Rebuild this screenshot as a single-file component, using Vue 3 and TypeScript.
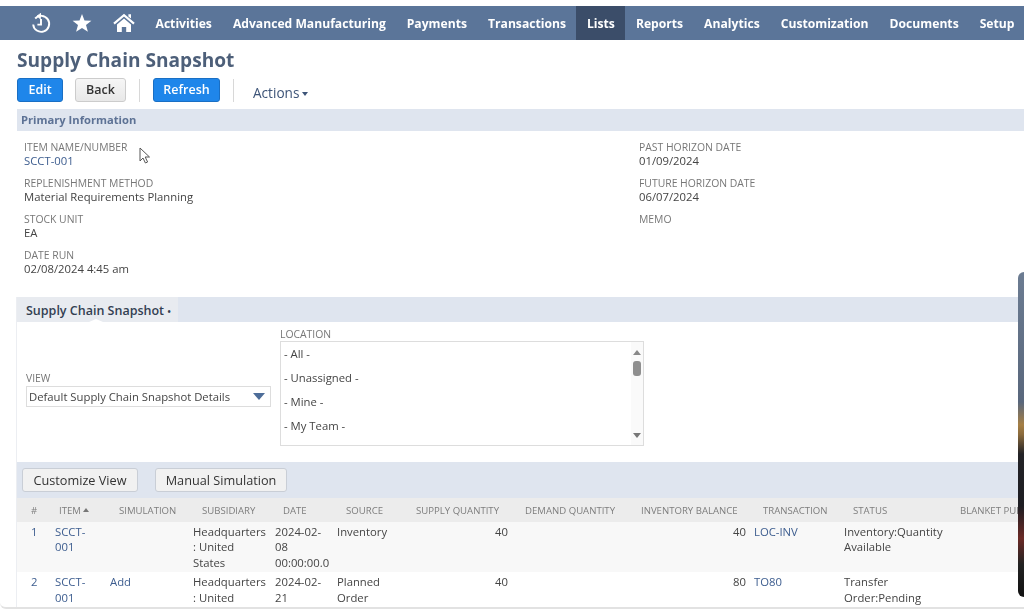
<script setup lang="ts">
const navItems = ['Activities', 'Advanced Manufacturing', 'Payments', 'Transactions', 'Lists', 'Reports', 'Analytics', 'Customization', 'Documents', 'Setup']

const leftFields = [
  { label: 'Item Name/Number', value: 'SCCT-001', link: true },
  { label: 'Replenishment Method', value: 'Material Requirements Planning' },
  { label: 'Stock Unit', value: 'EA' },
  { label: 'Date Run', value: '02/08/2024 4:45 am' },
]
const rightFields = [
  { label: 'Past Horizon Date', value: '01/09/2024' },
  { label: 'Future Horizon Date', value: '06/07/2024' },
  { label: 'Memo', value: '' },
]

const locations = ['- All -', '- Unassigned -', '- Mine -', '- My Team -']

const columns = [
  { key: 'num', label: '#', width: 34, pad: 14 },
  { key: 'item', label: 'Item', width: 55, pad: 8 },
  { key: 'sim', label: 'Simulation', width: 83, pad: 13 },
  { key: 'sub', label: 'Subsidiary', width: 82, pad: 13 },
  { key: 'date', label: 'Date', width: 62, pad: 12 },
  { key: 'source', label: 'Source', width: 79, pad: 13 },
  { key: 'supply', label: 'Supply Quantity', width: 100, pad: 4 },
  { key: 'demand', label: 'Demand Quantity', width: 121, pad: 13 },
  { key: 'balance', label: 'Inventory Balance', width: 117, pad: 8 },
  { key: 'trans', label: 'Transaction', width: 90, pad: 13 },
  { key: 'status', label: 'Status', width: 115, pad: 13 },
  { key: 'blanket', label: 'Blanket Purchase Order', width: 150, pad: 5 },
]

const rows = [
  { num: 1, item: 'SCCT-001', sim: '', sub: 'Headquarters : United States', date: '2024-02-08 00:00:00.0', source: 'Inventory', supply: 40, balance: 40, trans: 'LOC-INV', status: 'Inventory:Quantity Available' },
  { num: 2, item: 'SCCT-001', sim: 'Add', sub: 'Headquarters : United States', date: '2024-02-21 00:00:00.0', source: 'Planned Order', supply: 40, balance: 80, trans: 'TO80', status: 'Transfer Order:Pending Fulfillment' },
]
</script>

<template>
  <div class="page">
    <nav class="nav">
      <div class="nav-icons">
        <svg class="ic-history" width="22" height="22" viewBox="0 0 22 22" fill="none" stroke="#fff" stroke-width="1.9">
          <path d="M5.2 6.5A8 8 0 1 1 3.2 12.5" />
          <path d="M11 1.2 L7 4 L10.8 7.2" fill="#fff" stroke-width="0.8" />
          <path d="M11 7v5.6H7.4" />
        </svg>
        <svg class="ic-star" width="20" height="20" viewBox="0 0 20 20">
          <polygon fill="#fff" points="10,1 12.5,7.4 19.4,7.7 14,12 15.9,18.7 10,15 4.1,18.7 6,12 .6,7.7 7.5,7.4" />
        </svg>
        <svg class="ic-home" width="22" height="20" viewBox="0 0 22 20">
          <path fill="none" stroke="#fff" stroke-width="2.2" d="M1 10.6 11 2.2l10 8.4" />
          <path fill="#fff" d="M15.4 1.2h2.6v4.4l-2.6-2zM4 11.5 11 5.6l7 5.9V19H13.2v-5H8.8v5H4z" />
        </svg>
      </div>
      <a v-for="item in navItems" :key="item" class="nav-item" :class="{ active: item === 'Lists' }">{{ item }}</a>
    </nav>

    <main class="content">
      <h1 class="title">Supply Chain Snapshot</h1>

      <div class="actions">
        <button class="btn primary btn-edit">Edit</button>
        <button class="btn btn-back">Back</button>
        <span class="sep"></span>
        <button class="btn primary btn-refresh">Refresh</button>
        <span class="sep"></span>
        <span class="actions-menu">Actions<i class="caret"></i></span>
      </div>

      <div class="bar">Primary Information</div>

      <section class="fields">
        <div class="col">
          <div v-for="f in leftFields" :key="f.label" class="field">
            <div class="label">{{ f.label }}</div>
            <div class="value" :class="{ link: f.link }">{{ f.value }}</div>
          </div>
        </div>
        <div class="col col-right">
          <div v-for="f in rightFields" :key="f.label" class="field">
            <div class="label">{{ f.label }}</div>
            <div class="value">{{ f.value }}</div>
          </div>
        </div>
      </section>

      <section class="panel">
        <div class="tabs">
          <div class="tab">Supply Chain Snapshot <span class="dot">•</span></div>
        </div>

        <div class="filters">
          <div class="view-filter">
            <div class="label">View</div>
            <div class="select">
              <span>Default Supply Chain Snapshot Details</span>
              <i class="select-arrow"></i>
            </div>
          </div>
          <div class="location-filter">
            <div class="label">Location</div>
            <div class="listbox">
              <div class="options">
                <div v-for="l in locations" :key="l" class="option">{{ l }}</div>
              </div>
              <div class="scroll">
                <i class="up"></i>
                <i class="thumb"></i>
                <i class="down"></i>
              </div>
            </div>
          </div>
        </div>

        <div class="toolbar">
          <button class="btn plain">Customize View</button>
          <button class="btn plain">Manual Simulation</button>
        </div>

        <table class="grid">
          <colgroup>
            <col v-for="c in columns" :key="c.key" :style="{ width: c.width + 'px' }" />
          </colgroup>
          <thead>
            <tr>
              <th v-for="c in columns" :key="c.key" :style="{ paddingLeft: c.pad + 'px' }">
                {{ c.label }}<i v-if="c.key === 'item'" class="sort"></i>
              </th>
            </tr>
          </thead>
          <tbody>
            <tr v-for="r in rows" :key="r.num">
              <td class="link num">{{ r.num }}</td>
              <td class="link">{{ r.item }}</td>
              <td class="link">{{ r.sim }}</td>
              <td>{{ r.sub }}</td>
              <td class="date">{{ r.date }}</td>
              <td>{{ r.source }}</td>
              <td class="right">{{ r.supply }}</td>
              <td></td>
              <td class="right">{{ r.balance }}</td>
              <td class="link">{{ r.trans }}</td>
              <td>{{ r.status }}</td>
              <td></td>
            </tr>
          </tbody>
        </table>
      </section>
    </main>

    <svg class="cursor" width="13" height="18" viewBox="0 0 13 18">
      <path fill="#fff" stroke="#555" stroke-width="1" d="M1 1v13l3-3 2.4 5 2.2-1-2.4-5h4.3z" />
    </svg>
    <div class="video-edge"></div>
  </div>
</template>

<style>
html, body {
  margin: 0;
  background: #fff;
  overflow: hidden;
}
</style>

<style scoped>
.page {
  position: relative;
  width: 1024px;
  height: 609px;
  padding-top: 6px;
  box-sizing: border-box;
  overflow: hidden;
  font-family: "Open Sans", "Liberation Sans", sans-serif;
  font-size: 12px;
  color: #444;
  border-bottom: 2px solid #e2e2e2;
  border-bottom-left-radius: 6px;
  filter: blur(0.35px);
}
.nav {
  display: flex;
  align-items: stretch;
  height: 34px;
  background: #5b7599;
}
.nav-icons {
  display: flex;
  align-items: center;
  width: 145px;
  flex: none;
}
.ic-history { margin-left: 30px; }
.ic-star { margin-left: 20px; }
.ic-home { margin-left: 21px; }
.nav-item {
  display: flex;
  align-items: center;
  padding: 0 10.5px;
  color: #fff;
  font-size: 12.15px;
  font-weight: 700;
  white-space: nowrap;
}
.nav-item.active {
  background: #3b4d69;
}
.content {
  padding-left: 17px;
}
.title {
  margin: 7px 0 0;
  font-size: 19.1px;
  line-height: 26px;
  font-weight: 700;
  color: #4d5f79;
}
.actions {
  display: flex;
  align-items: center;
  height: 24px;
  margin-top: 5px;
}
.btn {
  height: 24px;
  padding: 0 0 1px;
  box-sizing: border-box;
  border-radius: 3px;
  font-family: inherit;
  font-size: 12.5px;
  font-weight: 600;
  border: 1px solid #ccc;
  background: linear-gradient(#f6f6f6, #e8e8e8);
  color: #333;
}
.btn.primary {
  background: #1f86ea;
  border-color: #1a6fc4;
  color: #fff;
}
.btn-edit { width: 46px; }
.btn-back { width: 51px; margin-left: 12px; }
.btn-refresh { width: 67px; }
.sep {
  width: 1px;
  height: 23px;
  margin: 0 13px;
  background: #d8d8d8;
}
.actions-menu {
  margin: 5px 0 0 6px;
  font-size: 13.6px;
  color: #3d5478;
}
.caret {
  display: inline-block;
  margin-left: 3px;
  vertical-align: 2px;
  border: 3.5px solid transparent;
  border-top: 4px solid #3d5478;
  border-bottom: 0;
}
.bar {
  height: 22px;
  margin-top: 7px;
  padding-left: 4px;
  background: #dfe5ef;
  font-size: 11.2px;
  line-height: 22px;
  font-weight: 700;
  color: #5d7295;
}
.fields {
  display: flex;
  height: 166px;
  padding: 9px 0 0 7px;
  box-sizing: border-box;
}
.col {
  flex: none;
  width: 615px;
}
.col-right {
  width: 300px;
}
.field {
  height: 36px;
}
.label {
  font-size: 10.4px;
  line-height: 14px;
  text-transform: uppercase;
  color: #777;
}
.value {
  font-size: 11.3px;
  line-height: 14px;
  color: #444;
}
.value.link,
.link {
  color: #3d5d8f;
}
.panel {
  margin-left: -1px;
  border-left: 1px solid #eceef2;
}
.tabs {
  height: 25px;
  background: #dfe5ef;
}
.tab {
  position: relative;
  width: 161px;
  height: 25px;
  padding-left: 9px;
  box-sizing: border-box;
  background: #e8ebf0;
  font-size: 12.5px;
  line-height: 27px;
  font-weight: 600;
  color: #333f52;
  white-space: nowrap;
}
.tab::after {
  content: "";
  position: absolute;
  left: 72px;
  bottom: 0;
  border: 7px solid transparent;
  border-bottom: 3px solid #fff;
  border-top: 0;
}
.dot {
  font-size: 10px;
}
.filters {
  display: flex;
  align-items: flex-start;
  height: 140px;
  padding-left: 9px;
  box-sizing: border-box;
}
.view-filter {
  width: 254px;
  margin-top: 49px;
}
.select {
  display: flex;
  align-items: center;
  justify-content: space-between;
  width: 245px;
  height: 21px;
  padding: 0 4px 0 2px;
  margin-top: 1px;
  box-sizing: border-box;
  border: 1px solid #ddd;
  font-size: 11.3px;
  color: #444;
}
.select-arrow {
  margin-right: 1px;
  border: 6px solid transparent;
  border-top: 7px solid #4d6d99;
  border-bottom: 0;
}
.location-filter {
  margin-top: 5px;
}
.listbox {
  display: flex;
  width: 364px;
  height: 105px;
  box-sizing: border-box;
  border: 1px solid #ddd;
}
.options {
  flex: 1;
  padding: 0 0 0 3px;
}
.option {
  height: 24px;
  font-size: 11.3px;
  line-height: 24px;
}
.scroll {
  position: relative;
  display: flex;
  flex-direction: column;
  align-items: center;
  width: 12px;
  background: #fafafa;
}
.scroll .up {
  margin-top: 8px;
  border: 4.5px solid transparent;
  border-bottom: 5px solid #888;
  border-top: 0;
}
.scroll .thumb {
  width: 8px;
  height: 15px;
  margin-top: 6px;
  border-radius: 3px;
  background: #8f8f8f;
}
.scroll .down {
  margin-top: auto;
  margin-bottom: 7px;
  border: 4.5px solid transparent;
  border-top: 5px solid #777;
  border-bottom: 0;
}
.toolbar {
  display: flex;
  gap: 17px;
  height: 36px;
  padding: 6px 0 0 5px;
  box-sizing: border-box;
  background: #dfe5ef;
}
.btn.plain {
  background: #f1f1f1;
  border-color: #c9ced6;
  font-size: 12.7px;
  font-weight: 500;
}
.btn.plain:first-child { width: 116px; }
.btn.plain:last-child { width: 132px; }
.grid {
  width: 1088px;
  table-layout: fixed;
  border-collapse: collapse;
}
.grid th {
  height: 24px;
  padding: 0 0 0 8px;
  background: #ececec;
  font-size: 9.6px;
  font-weight: 400;
  text-align: left;
  text-transform: uppercase;
  white-space: nowrap;
  overflow: hidden;
  color: #7d7d7d;
}
.sort {
  display: inline-block;
  margin-left: 2px;
  vertical-align: 2px;
  border: 3px solid transparent;
  border-bottom: 4px solid #777;
  border-top: 0;
}
.grid td {
  height: 49px;
  padding: 2px 4px;
  box-sizing: border-box;
  font-size: 11.3px;
  line-height: 15.4px;
  vertical-align: top;
  word-wrap: break-word;
}
.grid td.date {
  padding-right: 0;
}
.grid td.num {
  padding-left: 14px;
}
.grid td.right {
  text-align: right;
}
.grid tbody tr:first-child {
  background: #f8f8f8;
}
.cursor {
  position: absolute;
  left: 139px;
  top: 147px;
}
.video-edge {
  position: absolute;
  right: 0;
  top: 272px;
  width: 6px;
  height: 325px;
  border-radius: 14px 0 0 14px;
  background: linear-gradient(#6c7c92 0%, #59677c 40%, #a57f45 47%, #8a6a3c 50%, #232327 56%, #1d1d22 72%, #6b2a26 82%, #222 90%, #111 100%);
}
</style>
